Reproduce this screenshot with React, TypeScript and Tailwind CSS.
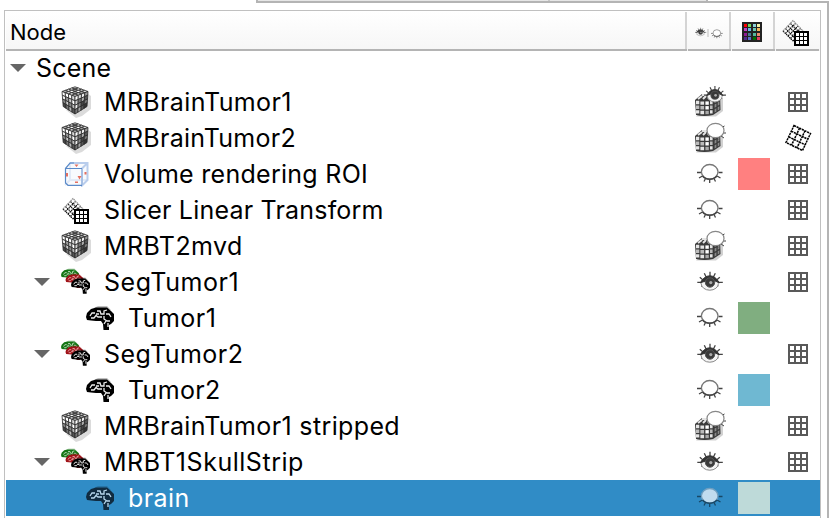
import React from "react";

type Pt = [number, number];

function facet(a: Pt, b: Pt, c: Pt, d: Pt, seed: number, fills: string[]) {
  const n = 4;
  const at = (s: number, t: number) => {
    const k = (i: 0 | 1) =>
      a[i] * (1 - s) * (1 - t) + b[i] * s * (1 - t) + c[i] * s * t + d[i] * (1 - s) * t;
    return `${k(0).toFixed(2)},${k(1).toFixed(2)}`;
  };
  const out: React.ReactElement[] = [];
  for (let i = 0; i < n; i++)
    for (let j = 0; j < n; j++)
      out.push(
        <polygon
          key={`${seed}-${i}-${j}`}
          points={`${at(i / n, j / n)} ${at((i + 1) / n, j / n)} ${at((i + 1) / n, (j + 1) / n)} ${at(i / n, (j + 1) / n)}`}
          fill={fills[j * n + i]}
          stroke="#2a2a2a"
          strokeWidth=".8"
        />,
      );
  return out;
}

const TOP = ["#ccc", "#fff", "#bbb", "#ddd", "#eee", "#999", "#fff", "#aaa", "#ddd", "#fff", "#bbb", "#eee", "#aaa", "#ddd", "#fff", "#ccc"];
const LEFT = ["#fff", "#fff", "#fff", "#ddd", "#eee", "#999", "#ccc", "#fff", "#888", "#ccc", "#888", "#bbb", "#444", "#777", "#bbb", "#555"];
const RIGHT = ["#fff", "#ddd", "#eee", "#999", "#ccc", "#777", "#aaa", "#555", "#eee", "#888", "#444", "#777", "#777", "#aaa", "#555", "#333"];

function Cube() {
  return (
    <svg width="32" height="32" viewBox="0 0 32 32" className="block">
      <path d="M6 24 L16 32 L22 30 L31 23 V10 L27 7Z" fill="#999" opacity=".35" />
      {facet([15, 0.8], [28, 5.5], [15, 10.5], [2, 5.5], 1, TOP)}
      {facet([2, 5.5], [15, 10.5], [15, 28], [3.2, 20.5], 2, LEFT)}
      {facet([15, 10.5], [28, 5.5], [27, 20.5], [15, 28], 3, RIGHT)}
    </svg>
  );
}

function BackCube() {
  return (
    <g>
      <path d="M2 30.500 H22 L29 25 V12 H20Z" fill="#999" opacity=".45" />
      <path d="M1 14 L8 8 H26 L26.500 24 L19 29 Q10 31 2 29Z" fill="#3a3a3a" />
      <path d="M4 13 l4-3 M9 13l3-3M14 13l3-3M8 9h5" stroke="#e4e4e4" strokeWidth="2" />
      {[14.8, 19.5, 24.2].map((y, i) => (
        <g key={y}>
          <path d={`M2 ${y} h3.300 v3.400 h-3.300z M6.400 ${y + 0.6} h3.700 v3.400 h-3.700z M16 ${y} h2.600 v3.400 h-2.600z`} fill={i === 1 ? "#bbb" : "#e4e4e4"} />
          <path d={`M11.400 ${y + 0.6} h3.400 v3.400 h-3.400z`} fill={i === 2 ? "#aaa" : "#fff"} />
          <path d={`M20.600 ${y - 1} l1.800-1 v3.300 l-1.800 1z M23.700 ${y - 3} l1.700-1 v3.300 l-1.700 1z`} fill="#888" />
        </g>
      ))}
    </g>
  );
}

function OpenEye() {
  return (
    <g fill="none" stroke="#444">
      <path d="M0 10 H4 M21 10H25.500 M2.5 5L6 8 M22.5 5L19 8 M7 1L9 5 M12.7 -.5V4 M18 1L16 5 M4 14L6 13M21 14L19.500 13" strokeWidth="1.3" />
      <ellipse cx="12.5" cy="11.3" rx="8.6" ry="6.6" fill="#f4f4f4" stroke="#888" strokeWidth="1" />
      <path d="M3 10.500 Q7 3.500 12.5 3.500 T22 10.500 Q17 7.500 12.5 8 T3 10.500Z" fill="#333" stroke="#333" />
      <circle cx="12.7" cy="10.2" r="4.7" fill="#3a3a3a" stroke="#555" />
      <circle cx="13.5" cy="10.3" r="1.6" fill="#aaa" stroke="none" />
    </g>
  );
}

function ClosedEye({ fill = "#fff", stroke = "#444", rim = "#777" }: { fill?: string; stroke?: string; rim?: string }) {
  return (
    <g fill="none" stroke={stroke}>
      <path d="M0 8.5H4 M21.5 8.5H25.5 M2 14L5.5 12 M23.5 14L20 12 M7 17.5L8.5 14.5 M12.7 19V15.5 M18.5 17.5L17 14.5" strokeWidth="1.3" />
      <ellipse cx="12.7" cy="7.8" rx="8.3" ry="7.300" fill={fill} stroke={rim} strokeWidth="1.300" />
      <path d="M5.500 12 Q8 15.200 12.7 15.200 T19.900 12" strokeWidth="1.400" />
    </g>
  );
}

type Vis = "open" | "closed" | "cubeOpen" | "cubeClosed";

function Visibility({ kind, selected }: { kind: Vis; selected?: boolean }) {
  if (kind === "open")
    return (
      <svg width="26" height="22" viewBox="0 0 26 22" className="block">
        <g transform="translate(.3 1.3)"><OpenEye /></g>
      </svg>
    );
  if (kind === "closed")
    return (
      <svg width="26" height="22" viewBox="0 0 26 22" className="block">
        <g transform="translate(0 1)">
          {selected ? <ClosedEye fill="#c0dcef" stroke="#184765" rim="#6f9fc0" /> : <ClosedEye />}
        </g>
      </svg>
    );
  return (
    <svg width="32" height="32" viewBox="0 0 32 32" className="block">
      <BackCube />
      {kind === "cubeOpen" ? (
        <g transform="translate(10 .5) scale(.86)"><OpenEye /></g>
      ) : (
        <g transform="translate(11 1)">
          <path d="M16 13l3 2M18 10h3.500M12 15l1 2M17.500 4l2-1" stroke="#444" />
          <ellipse cx="10.5" cy="7.5" rx="8.5" ry="7.2" fill="#fff" stroke="#888" strokeWidth="1.200" />
        </g>
      )}
    </svg>
  );
}

function Grid() {
  return (
    <svg width="20" height="20" viewBox="0 0 20 20" className="block">
      <path d="M1 1H19V19H1ZM7 1V19M13 1V19M1 7H19M1 13H19" fill="none" stroke="#595959" strokeWidth="2" shapeRendering="crispEdges" />
    </svg>
  );
}

function WarpedGrid() {
  return (
    <svg width="28" height="28" viewBox="0 0 28 28" className="block">
      <path
        d="M10 1.500L26.500 9.500L18.500 26.500L2 18.500ZM15.500 4.200L7.500 21.200M21 6.800L13 23.800M7.300 7.200L23.800 15.200M4.700 12.800L21.200 20.800"
        fill="none" stroke="#000" strokeWidth="1.500" strokeDasharray="2.200 .7"
      />
    </svg>
  );
}

function TransformIcon() {
  return (
    <svg width="28" height="28" viewBox="0 0 28 28" className="block">
      <g fill="none" stroke="#111" strokeWidth="1.200" strokeDasharray="1.500 .700">
        <path d="M3.500 15.500L13.500 5.500M6 18L16 8M8.500 20.500L18.500 10.500M11 23L21 13" />
        <path d="M8.500 5.500L18.500 15.500M6 8L16 18M3.500 10.500L13.500 20.500M1 13L11 23" />
        <path d="M1 13L11 2.500L21 13" stroke="#888" />
      </g>
      <path d="M12 13h15v15h-15z" fill="#000" />
      <path d="M14 15h3v3h-3zM18 15h3v3h-3zM22 15h3v3h-3zM14 19h3v3h-3zM18 19h3v3h-3zM22 19h3v3h-3zM14 23h3v3h-3zM18 23h3v3h-3zM22 23h3v3h-3z" fill="#fff" />
    </svg>
  );
}

function RoiIcon() {
  return (
    <svg width="26" height="26" viewBox="0 0 26 26" className="block">
      <path d="M1 7L6 1.500H24V19L18 24.500H1Z" fill="#f8fafd" />
      <g fill="none">
        <path d="M6 1.500V19H24M6 19L1 24" stroke="#e2eaf7" strokeWidth="2" />
        <path d="M6 2H23.500V19L18 24.500V7.500L23.500 2" stroke="#b9cdec" strokeWidth="2" />
        <path d="M18 7.500V24" stroke="#9db9e0" strokeWidth="1.300" />
        <path d="M18 7.500H1.500V22L4 24.300H18M1.500 7.500L6 2H10" stroke="#5b8ac8" strokeWidth="1.200" />
      </g>
      <path d="M10.500 3.500h4l-2 2.500zM13.500 15h4l-2 3.500zM2 12h2v3.500h-2zM20.500 11h2v2.500h-2zM11 20.500h3v1.500h-3z" fill="#e2604f" opacity=".9" />
    </svg>
  );
}

function BrainShape({ fill, line }: { fill: string; line: string }) {
  return (
    <g>
      <path d="M8 2L12 0H21L25 4Z" fill={fill} opacity=".25" />
      <path d="M0 11L1 7L5 3L10 1.500H21L25 5L28 8V15L25 18L23 19V24H17.500L17 18L15 15H10L5 14.500L1 14Z" fill={fill} />
      <path
        d="M4 10L6 7H9M5 12H8L10 9.500L12 11H16M11 5H14L15 8H18V5L21 4M13 8H10M18 10V13L21 15H24M20 8H23L25 11M20 15L18 18M22 17V21"
        fill="none" stroke={line} strokeWidth="1.300"
      />
    </g>
  );
}

function Brain({ selected }: { selected?: boolean }) {
  return (
    <svg width="28" height="26" viewBox="0 0 28 26" className="block">
      <g transform="translate(0 1)">
        <BrainShape fill={selected ? "#102b40" : "#000"} line={selected ? "#b8d8ed" : "#eee"} />
      </g>
    </svg>
  );
}

function Segmentation() {
  return (
    <svg width="30" height="28" viewBox="0 0 30 28" className="block">
      <g transform="translate(1 .5) scale(.64 .6)"><BrainShape fill="#147514" line="#cfe4cf" /></g>
      <g transform="translate(5.500 5.500) scale(.64 .6)"><BrainShape fill="#a01218" line="#edbaba" /></g>
      <g transform="translate(11 9.500) scale(.68 .68)"><BrainShape fill="#000" line="#fff" /></g>
    </svg>
  );
}

function Arrow() {
  return (
    <svg width="16" height="8" viewBox="0 0 16 8" className="block">
      <path d="M0 0H16L8 8Z" fill="#666" />
    </svg>
  );
}

const SWATCHES = [
  "#ff0000", "#6ed855", "#8bd0dc", "#f3f1a6",
  "#c23fc4", "#68b7e8", "#6cc7b0", "#f0b45c",
  "#8f1b91", "#467c91", "#55b79d", "#ec8a6b",
  "#50298b", "#5870c8", "#007000", "#e53a60",
];
const CELL = [2, 6, 11, 15];

function Palette() {
  return (
    <svg width="20" height="20" viewBox="0 0 20 20" className="block" shapeRendering="crispEdges">
      <rect width="20" height="20" fill="#222" />
      {SWATCHES.map((c, i) => (
        <rect key={i} x={CELL[i % 4]} y={CELL[Math.floor(i / 4)]} width="3" height="3" fill={c} />
      ))}
    </svg>
  );
}

function HeaderEyes() {
  return (
    <svg width="30" height="14" viewBox="0 0 30 14" className="block">
      <g transform="translate(1 2) scale(.44)"><OpenEye /></g>
      <path d="M14 3V11" stroke="#bbb" />
      <g transform="translate(17 3.500) scale(.46)"><ClosedEye stroke="#444" rim="#666" /></g>
    </svg>
  );
}

type Item = {
  name: string;
  icon: "cube" | "roi" | "transform" | "seg" | "brain";
  vis: Vis;
  color?: string;
  xf?: "grid" | "warp";
  spacing: string;
  selected?: boolean;
};

const ITEMS: Item[] = [
  { name: "MRBrainTumor1", icon: "cube", vis: "cubeOpen", xf: "grid", spacing: "tracking-[0.35px]" },
  { name: "MRBrainTumor2", icon: "cube", vis: "cubeClosed", xf: "warp", spacing: "tracking-[0.3px]" },
  { name: "Volume rendering ROI", icon: "roi", vis: "closed", color: "bg-[#ff8080]", xf: "grid", spacing: "tracking-[0.28px]" },
  { name: "Slicer Linear Transform", icon: "transform", vis: "closed", xf: "grid", spacing: "tracking-[0.2px]" },
  { name: "MRBT2mvd", icon: "cube", vis: "cubeClosed", xf: "grid", spacing: "tracking-[0.42px]" },
  { name: "SegTumor1", icon: "seg", vis: "open", xf: "grid", spacing: "tracking-[0.55px]" },
  { name: "Tumor1", icon: "brain", vis: "closed", color: "bg-[#80ae80]", spacing: "tracking-[0.45px]" },
  { name: "SegTumor2", icon: "seg", vis: "open", xf: "grid", spacing: "tracking-[0.45px]" },
  { name: "Tumor2", icon: "brain", vis: "closed", color: "bg-[#6fb8d2]", spacing: "tracking-[0.3px]" },
  { name: "MRBrainTumor1 stripped", icon: "cube", vis: "cubeClosed", xf: "grid", spacing: "tracking-[0.37px]" },
  { name: "MRBT1SkullStrip", icon: "seg", vis: "open", xf: "grid", spacing: "tracking-[0.53px]" },
  { name: "brain", icon: "brain", vis: "closed", color: "bg-[#bedad9]", spacing: "tracking-[0.4px]", selected: true },
];

function Row({ item }: { item: Item }) {
  const child = item.icon === "brain";
  return (
    <div className={`grid h-9 shrink-0 grid-cols-[682px_44px_44px_44px] items-center ${item.selected ? "bg-[#308cc6] text-white" : "text-black"}`}>
      <div className="flex h-9 items-center">
        <div className={`flex shrink-0 items-center ${child ? "w-[80px]" : "w-[54px]"}`}>
          {item.icon === "seg" && <div className="ml-7"><Arrow /></div>}
        </div>
        <div className={`flex shrink-0 items-center ${child ? "w-[42px]" : "w-[44px]"}`}>
          {item.icon === "cube" && <Cube />}
          {item.icon === "roi" && <div className="ml-1"><RoiIcon /></div>}
          {item.icon === "transform" && <div className="ml-0.5"><TransformIcon /></div>}
          {item.icon === "seg" && <Segmentation />}
          {child && <Brain selected={item.selected} />}
        </div>
        <span className={`whitespace-pre text-[25px] leading-9 ${item.spacing}`}>{item.name}</span>
      </div>
      <div className="flex justify-center"><Visibility kind={item.vis} selected={item.selected} /></div>
      <div className="flex justify-center">{item.color && <div className={`size-8 ${item.color}`} />}</div>
      <div className="flex justify-center">
        {item.xf === "grid" && <Grid />}
        {item.xf === "warp" && <WarpedGrid />}
      </div>
    </div>
  );
}

function HeaderCell({ width, last, children }: { width: string; last?: boolean; children: React.ReactNode }) {
  return (
    <div className={`flex h-full shrink-0 flex-col border-b-2 border-[#b4b4b4] pt-px ${width}`}>
      <div className={`flex flex-1 items-center border-r-2 pt-[3px] ${last ? "border-transparent" : "border-[#d4d4d4]"}`}>
        {children}
      </div>
    </div>
  );
}

export default function App() {
  return (
    <div className="flex h-[518px] w-[834px] flex-col overflow-hidden bg-white font-['Inter','Liberation_Sans',sans-serif] text-black">
      <div className="ml-64 flex h-[3px] w-[573px] shrink-0 border-b-2 border-l-2 border-[#b4b4b4]">
        <div className="h-px w-[290px] bg-[#e6e6e6]" />
        <div className="h-px w-0.5 bg-[#c8c8c8]" />
        <div className="h-px w-[156px] bg-[#e6e6e6]" />
        <div className="h-px w-0.5 bg-[#b4b4b4]" />
      </div>
      <div className="flex min-h-0 w-[829px] flex-1 border-r-2 border-[#b4b4b4] pl-1 pt-[7px]">
        <div className="flex w-[817px] flex-col border-x border-t border-[#c0c0c0] pl-px">
          <div className="flex h-10 shrink-0 gap-px bg-linear-to-b from-white to-[#f6f6f6]">
            <HeaderCell width="w-[681px]"><span className="pl-1 text-[22px] leading-7">Node</span></HeaderCell>
            <HeaderCell width="w-[43px]"><div className="mx-auto pt-px"><HeaderEyes /></div></HeaderCell>
            <HeaderCell width="w-[43px]"><div className="ml-2.5"><Palette /></div></HeaderCell>
            <HeaderCell width="w-[43px]" last><div className="ml-1.5"><TransformIcon /></div></HeaderCell>
          </div>
          <div className="flex h-[33px] shrink-0 items-center pl-1">
            <Arrow />
            <span className="ml-2.5 text-[25px] leading-8 tracking-[0.2px]">Scene</span>
          </div>
          {ITEMS.map((item) => <Row key={item.name} item={item} />)}
        </div>
      </div>
    </div>
  );
}
